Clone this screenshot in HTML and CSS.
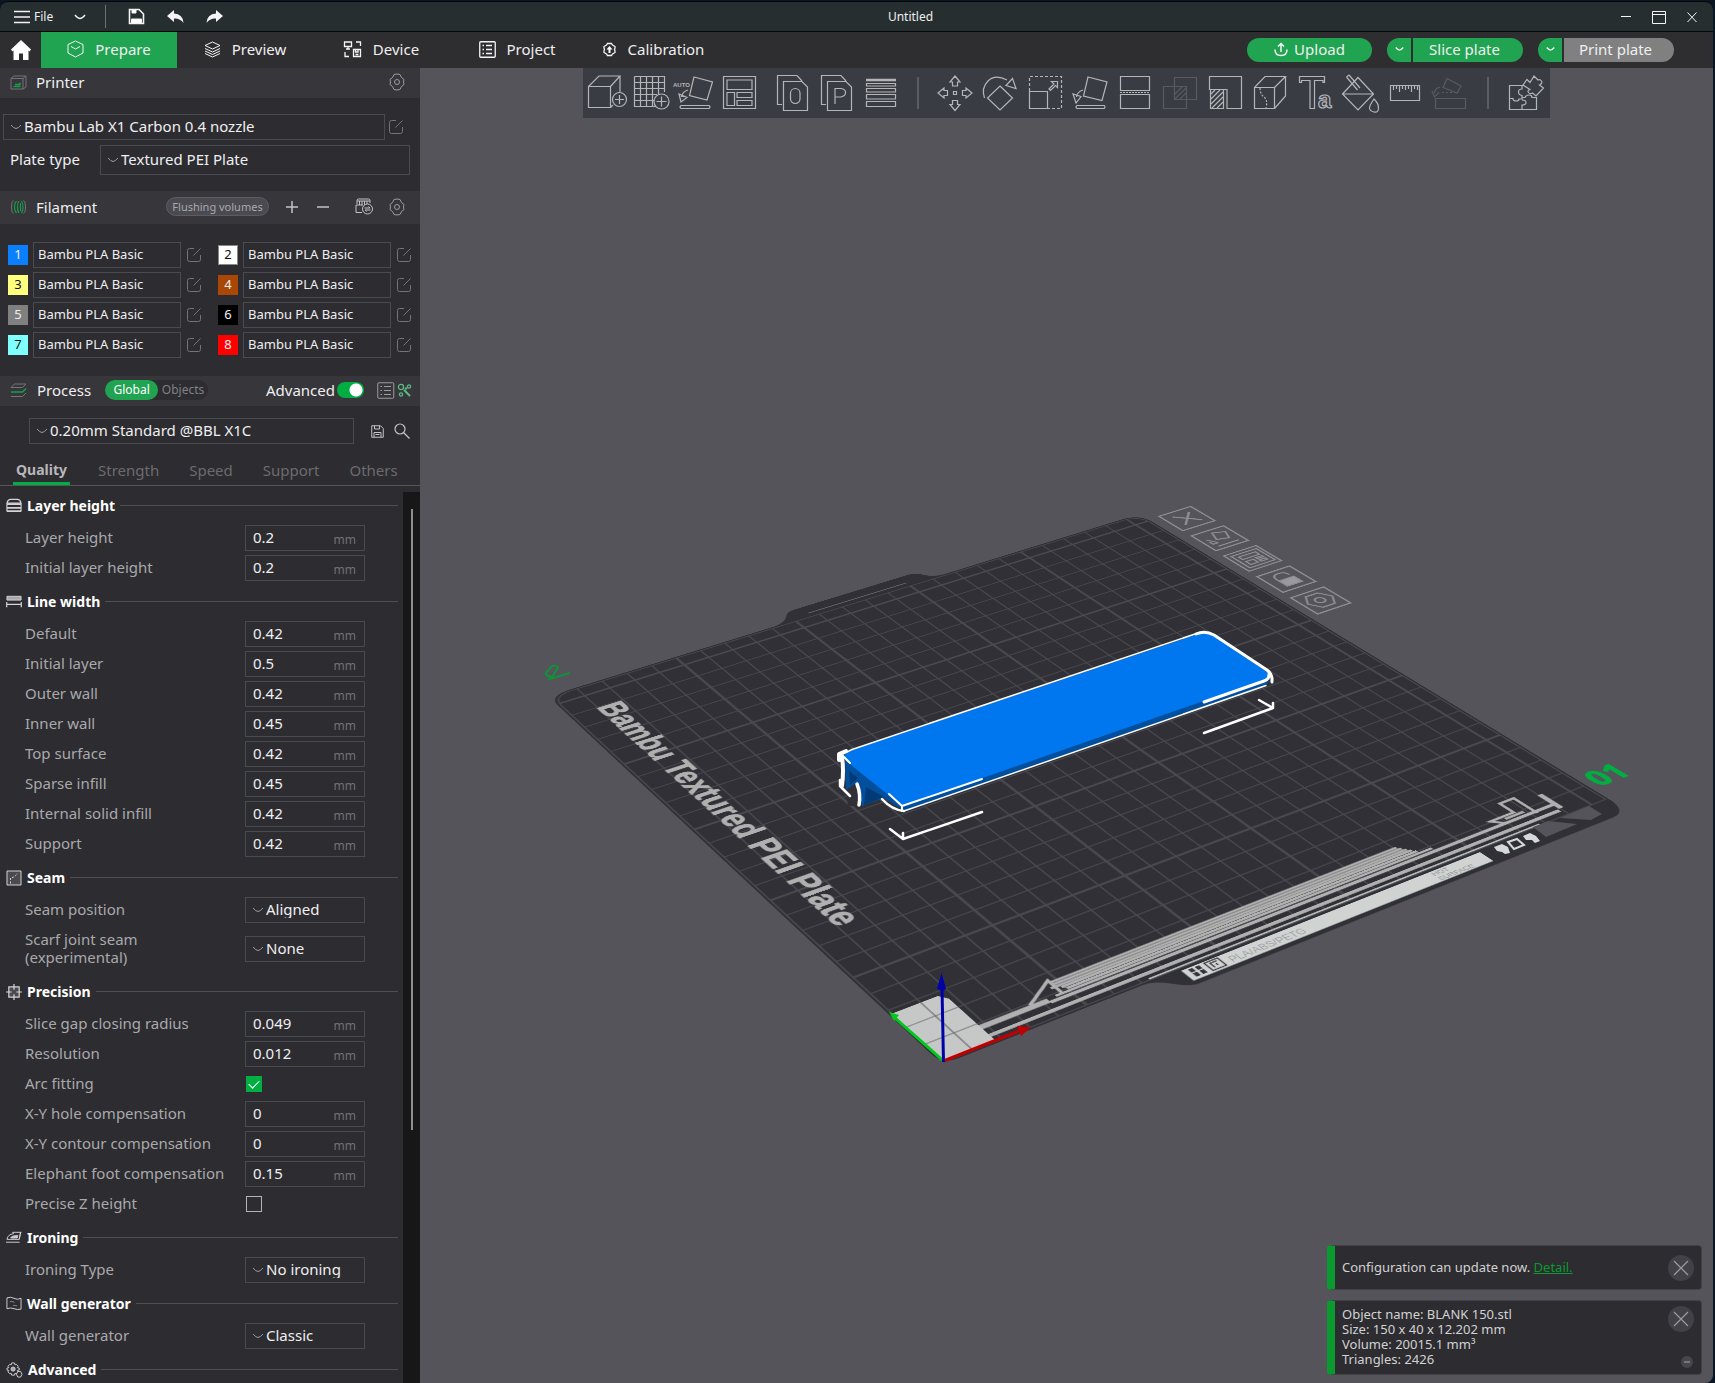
FILE: index.html
```html
<!DOCTYPE html>
<html lang="en">
<head>
<meta charset="utf-8">
<title>Untitled</title>
<link rel="stylesheet" href="styles.css">
</head>
<body>
<svg class="defs" width="0" height="0" aria-hidden="true">
  <symbol id="chev" viewBox="0 0 12 8"><path d="M1 2Q4 5.500 6 5.500T11 2"/></symbol>
  <symbol id="edit" viewBox="0 0 16 16"><path d="M8 1.500H3.500Q1.500 1.500 1.500 3.500V12.500Q1.500 14.500 3.500 14.500H12.500Q14.500 14.500 14.500 12.500V8M7.500 8.500L14.500 1.500"/></symbol>
  <symbol id="nut" viewBox="0 0 18 18"><path d="M6 1.500Q9 .5 12 1.500L13.500 4.500L16 6.500Q15 9 16 11.500L13.500 13.500L12 16.500Q9 17.500 6 16.500L4.500 13.500L2 11.500Q3 9 2 6.500L4.500 4.500Z"/><circle cx="9" cy="9" r="2.500"/></symbol>
  <symbol id="cross" viewBox="0 0 26 26"><path d="M6 6L20 20M20 6L6 20"/></symbol>
</svg>

<header class="titlebar">
  <button class="file"><svg class="ic" width="16" height="14" viewBox="0 0 16 14"><path d="M0 1.500H16M0 7H16M0 12.500H16" stroke-width="1.500"/></svg>File</button>
  <button class="plain chevbtn" aria-label="More"><svg class="ic" width="12" height="8" stroke-width="1.500"><use href="#chev"/></svg></button>
  <span class="tdiv"></span>
  <button class="plain tool" aria-label="Save"><svg class="ic" width="17" height="17" viewBox="0 0 17 17"><path d="M1.500 1.500H11L15.500 6V15.500H1.500Z" stroke-width="1.600"/><path d="M4 1.500H8V5H4ZM3.500 11H13.500V15.500H3.500Z" fill="#fff"/></svg></button>
  <button class="plain tool" aria-label="Undo"><svg width="17" height="14" viewBox="0 0 17 14" fill="#f4f4f4"><path d="M0 6L7 0V3.500Q16 4 16.500 13Q13 8 7 8.500V12Z"/></svg></button>
  <button class="plain tool" aria-label="Redo"><svg width="17" height="14" viewBox="0 0 17 14" fill="#f4f4f4"><path d="M17 6L10 0V3.500Q1 4 .5 13Q4 8 10 8.500V12Z"/></svg></button>
  <h1 class="title">Untitled</h1>
  <div class="winbtns">
    <button class="plain" aria-label="Minimize"><svg class="ic" width="14" height="14" viewBox="0 0 14 14"><path d="M2 6.500H12"/></svg></button>
    <button class="plain" aria-label="Maximize"><svg class="ic" width="14" height="14" viewBox="0 0 14 14"><path d="M.5 1.500H13.500V13.500H.5ZM.5 4.500H13.500"/></svg></button>
    <button class="plain" aria-label="Close"><svg class="ic" width="14" height="14" viewBox="0 0 14 14"><path d="M2.500 2.500L11.500 12M11.500 2.500L2.500 12"/></svg></button>
  </div>
</header>

<nav class="nav">
  <a class="home" href="#" aria-label="Home"><svg width="20" height="20" viewBox="0 0 20 20" fill="#fff"><path d="M10 0L20 9.500L18.500 11.500L17.500 10.500V20H12V13.500H8V20H2.500V10.500L1.500 11.500L0 9.500Z"/></svg></a>
  <a class="tab on" href="#"><svg class="ic" width="17" height="18" viewBox="0 0 17 18"><path d="M8.500 1L16 4.500V13L8.500 17L1 13V4.500ZM4 6.500L8.500 9L13 6.500"/></svg>Prepare</a>
  <a class="tab" href="#"><svg class="ic" width="17" height="17" viewBox="0 0 17 17"><path d="M8.500 1L16 4.500L8.500 8L1 4.500ZM1 7.500L8.500 11L16 7.500M1 10L8.500 13.500L16 10M1 12.500L8.500 16L16 12.500"/></svg>Preview</a>
  <a class="tab" href="#"><svg class="ic" width="19" height="17" viewBox="0 0 19 17"><path d="M1.500 1H8.500V5.500H1.500ZM5 5.500V8M3 8H7M13 1H17.500V5M2 11V15.500H6M10.500 8.500H17.500V15.500H10.500ZM12.500 8.500V11H15V8.500M12.500 13.500H15.500" stroke-width="1.300"/></svg>Device</a>
  <a class="tab" href="#"><svg class="ic" width="17" height="17" viewBox="0 0 17 17"><rect x=".75" y=".75" width="15.500" height="15.500" rx="1" stroke-width="1.300"/><path d="M3.500 4.500H5M7 4.500H13M3.500 8.500H5M7 8.500H13M3.500 12.500H5M7 12.500H13" stroke-width="1.400"/></svg>Project</a>
  <a class="tab" href="#"><svg class="ic" width="15" height="15" viewBox="0 0 15 15"><path d="M5.500 1.500H9.500L10.500 3L13 4.500V6L12.500 7.500L13 9V10.500L10.500 12L9.500 13.500H5.500L4.500 12L2 10.500V9L2.500 7.500L2 6V4.500L4.500 3Z" stroke-width="1.300"/><path d="M7.500 4L10.500 7.500H8.500V11H6.500V7.500H4.500Z" fill="#fff" stroke="none"/></svg>Calibration</a>
  <div class="actions">
    <button class="pill upload"><svg class="ic" width="14" height="15" viewBox="0 0 14 15" stroke-width="1.500"><path d="M7 10V1.500M4 4.500L7 1.500L10 4.500M1 7.500Q1 13.500 7 13.500T13 7.500"/></svg>Upload</button>
    <div class="split"><button class="pill drop" aria-label="Slice options"><svg class="ic" width="9" height="6" stroke-width="1.600"><use href="#chev"/></svg></button><button class="pill main">Slice plate</button></div>
    <div class="split"><button class="pill drop" aria-label="Print options"><svg class="ic" width="9" height="6" stroke-width="1.600"><use href="#chev"/></svg></button><button class="pill main off">Print plate</button></div>
  </div>
</nav>

<div class="work">
<aside class="side">
  <div class="shead">
    <svg class="dim" width="17" height="15" viewBox="0 0 17 15"><path d="M1 3.500L4 1H16V12L13 14H1ZM1 3.500H13V14M13 3.500L16 1"/><path d="M3.500 11.500H10.500M5 9.500H10V7.500" stroke="#12a048" stroke-width="1.500"/></svg>
    <h2>Printer</h2><span class="grow"></span>
    <button class="plain nutbtn" aria-label="Printer settings"><svg class="gray" width="18" height="18"><use href="#nut"/></svg></button>
  </div>
  <div class="printer">
    <div class="prow">
      <span class="sel grow"><svg class="gray" width="12" height="8"><use href="#chev"/></svg><select aria-label="Printer"><option>Bambu Lab X1 Carbon 0.4 nozzle</option></select></span>
      <button class="plain" aria-label="Edit printer"><svg class="dim" width="16" height="16"><use href="#edit"/></svg></button>
    </div>
    <div class="prow plate">
      <label for="plate">Plate type</label>
      <span class="sel tall grow"><svg class="gray" width="12" height="8"><use href="#chev"/></svg><select id="plate"><option>Textured PEI Plate</option></select></span>
    </div>
  </div>

  <div class="shead fil">
    <svg class="dim" width="17" height="16" viewBox="0 0 17 16"><path d="M3.500 1.500Q1.500 2 1.500 8T3.500 14.500M13.500 1.500Q15.500 2 15.500 8T13.500 14.500"/><path d="M6.500 2Q4.500 4 4.500 8T6.500 14M9 2Q7.500 4 7.500 8T9 14M11.500 2Q13 4 13 8T11.500 14M10.500 4V12" stroke="#12a048" stroke-width="1.200"/></svg>
    <h2>Filament</h2><span class="grow"></span>
    <button class="flush">Flushing volumes</button>
    <button class="plain pm" aria-label="Add filament"><svg class="lite" width="12" height="12" viewBox="0 0 12 12"><path d="M6 0V12M0 6H12" stroke-width="1.500"/></svg></button>
    <button class="plain pm" aria-label="Remove filament"><svg class="lite" width="12" height="12" viewBox="0 0 12 12"><path d="M0 6H12" stroke-width="1.500"/></svg></button>
    <button class="plain ams" aria-label="Sync filaments"><svg class="lite" width="19" height="17" viewBox="0 0 19 17"><path d="M2 6V2.500Q2 1 3.500 1H13.500Q15 1 15 2.500V5M4.500 3V7M7 3V7M9.500 3V7M12 3V6M2 3H15M1 7H8M1 7V14.500H7"/><circle cx="12.500" cy="11" r="5"/><path d="M9.500 10H15L13.500 8.500M15.500 12H10L11.500 13.500"/></svg></button>
    <button class="plain nutbtn" aria-label="Filament settings"><svg class="gray" width="18" height="18"><use href="#nut"/></svg></button>
  </div>
  <div class="filaments">
    <div class="fitem"><span class="sw s1">1</span><select aria-label="Filament 1"><option>Bambu PLA Basic</option></select><button class="plain" aria-label="Edit 1"><svg class="dim" width="16" height="16"><use href="#edit"/></svg></button></div>
    <div class="fitem"><span class="sw s2">2</span><select aria-label="Filament 2"><option>Bambu PLA Basic</option></select><button class="plain" aria-label="Edit 2"><svg class="dim" width="16" height="16"><use href="#edit"/></svg></button></div>
    <div class="fitem"><span class="sw s3">3</span><select aria-label="Filament 3"><option>Bambu PLA Basic</option></select><button class="plain" aria-label="Edit 3"><svg class="dim" width="16" height="16"><use href="#edit"/></svg></button></div>
    <div class="fitem"><span class="sw s4">4</span><select aria-label="Filament 4"><option>Bambu PLA Basic</option></select><button class="plain" aria-label="Edit 4"><svg class="dim" width="16" height="16"><use href="#edit"/></svg></button></div>
    <div class="fitem"><span class="sw s5">5</span><select aria-label="Filament 5"><option>Bambu PLA Basic</option></select><button class="plain" aria-label="Edit 5"><svg class="dim" width="16" height="16"><use href="#edit"/></svg></button></div>
    <div class="fitem"><span class="sw s6">6</span><select aria-label="Filament 6"><option>Bambu PLA Basic</option></select><button class="plain" aria-label="Edit 6"><svg class="dim" width="16" height="16"><use href="#edit"/></svg></button></div>
    <div class="fitem"><span class="sw s7">7</span><select aria-label="Filament 7"><option>Bambu PLA Basic</option></select><button class="plain" aria-label="Edit 7"><svg class="dim" width="16" height="16"><use href="#edit"/></svg></button></div>
    <div class="fitem"><span class="sw s8">8</span><select aria-label="Filament 8"><option>Bambu PLA Basic</option></select><button class="plain" aria-label="Edit 8"><svg class="dim" width="16" height="16"><use href="#edit"/></svg></button></div>
  </div>

  <div class="shead proc">
    <svg class="dim" width="17" height="15" viewBox="0 0 17 15"><path d="M4.500 1H16L12.500 4.500H1ZM1 13.500H12.500L16 10"/><path d="M1 9H12.500L16 5.500" stroke="#12a048" stroke-width="1.500"/></svg>
    <h2>Process</h2>
    <div class="scope"><button class="on">Global</button><button>Objects</button></div>
    <span class="grow"></span>
    <label for="adv">Advanced</label><input class="switch" type="checkbox" id="adv" checked>
    <button class="plain list" aria-label="Parameter list"><svg class="gray" width="18" height="17" viewBox="0 0 18 17"><rect x=".75" y=".75" width="16" height="15.500" rx="1"/><path d="M3.500 4.500H5M7 4.500H14M3.500 8.500H5M7 8.500H14M3.500 12.500H5M7 12.500H14"/></svg></button>
    <button class="plain" aria-label="Compare"><svg width="15" height="15" viewBox="0 0 15 15" fill="none" stroke="#5cb883" stroke-width="1.300"><circle cx="4" cy="4" r="2.600"/><circle cx="12" cy="3.500" r="1.600"/><circle cx="4" cy="11.500" r="1.600"/><path d="M7 7L13 13M8 6L10 5" stroke-width="2"/></svg></button>
  </div>
  <div class="preset">
    <span class="sel grow"><svg class="gray" width="12" height="8"><use href="#chev"/></svg><select aria-label="Process preset"><option>0.20mm Standard @BBL X1C</option></select></span>
    <button class="plain" aria-label="Save preset"><svg class="lite" width="13" height="13" viewBox="0 0 13 13"><path d="M.75 .75H9.500L12.250 3.500V12.250H.75ZM3.500 .75V4H8.500V.75M3 12V7.500H10V12M4.500 9.500H8.500"/></svg></button>
    <button class="plain" aria-label="Search"><svg class="lite" width="16" height="16" viewBox="0 0 16 16"><circle cx="6" cy="6" r="5" stroke-width="1.200"/><path d="M9.500 9.500L15.500 15.500" stroke-width="1.200"/></svg></button>
  </div>
  <div class="ptabs"><a class="on" href="#">Quality</a><a href="#">Strength</a><a href="#">Speed</a><a href="#">Support</a><a href="#">Others</a></div>

  <div class="scroll">
    <form class="params">
      <h3><svg class="hic" width="16" height="15" viewBox="0 0 17 15"><path d="M1 5Q2 1 5 1H12Q15 1 16 5ZM1 5.500V14M16 5.500V14" stroke-width="1.200"/><path d="M1 6H16M1 10H16M1 13.500H16" stroke-width="1.800"/></svg>Layer height</h3>
      <div class="row"><label for="p1">Layer height</label><span class="field"><input id="p1" value="0.2"><i>mm</i></span></div>
      <div class="row"><label for="p2">Initial layer height</label><span class="field"><input id="p2" value="0.2"><i>mm</i></span></div>
      <h3><svg class="hic" width="16" height="13" viewBox="0 0 17 13"><path d="M1 1H16V5H1Z" fill="#a8a8a8"/><path d="M.75 7V12.500M16.250 7V12.500M1 9.500H16" stroke-width="1.300"/></svg>Line width</h3>
      <div class="row"><label for="w1">Default</label><span class="field"><input id="w1" value="0.42"><i>mm</i></span></div>
      <div class="row"><label for="w2">Initial layer</label><span class="field"><input id="w2" value="0.5"><i>mm</i></span></div>
      <div class="row"><label for="w3">Outer wall</label><span class="field"><input id="w3" value="0.42"><i>mm</i></span></div>
      <div class="row"><label for="w4">Inner wall</label><span class="field"><input id="w4" value="0.45"><i>mm</i></span></div>
      <div class="row"><label for="w5">Top surface</label><span class="field"><input id="w5" value="0.42"><i>mm</i></span></div>
      <div class="row"><label for="w6">Sparse infill</label><span class="field"><input id="w6" value="0.45"><i>mm</i></span></div>
      <div class="row"><label for="w7">Internal solid infill</label><span class="field"><input id="w7" value="0.42"><i>mm</i></span></div>
      <div class="row"><label for="w8">Support</label><span class="field"><input id="w8" value="0.42"><i>mm</i></span></div>
      <h3><svg class="hic" width="16" height="16" viewBox="0 0 16 16"><path d="M1 1H15V15H1Z" fill="#4b4a4f"/><path d="M4.500 13.500V8Q9 7.500 11.500 3" stroke-dasharray="2 1.500"/></svg>Seam</h3>
      <div class="row"><label for="s1">Seam position</label><span class="sel fld"><svg class="gray" width="12" height="8"><use href="#chev"/></svg><select id="s1"><option>Aligned</option></select></span></div>
      <div class="row two"><label for="s2">Scarf joint seam<br>(experimental)</label><span class="sel fld"><svg class="gray" width="12" height="8"><use href="#chev"/></svg><select id="s2"><option>None</option></select></span></div>
      <h3><svg class="hic" width="16" height="16" viewBox="0 0 17 17"><path d="M3 3H14V14H3Z" fill="#4b4a4f" stroke-width="1.300"/><path d="M8.500 0V6M8.500 11V17M0 8.500H6M11 8.500H17" stroke-width="1.300"/></svg>Precision</h3>
      <div class="row"><label for="r1">Slice gap closing radius</label><span class="field"><input id="r1" value="0.049"><i>mm</i></span></div>
      <div class="row"><label for="r2">Resolution</label><span class="field"><input id="r2" value="0.012"><i>mm</i></span></div>
      <div class="row"><label for="r3">Arc fitting</label><input class="check" type="checkbox" id="r3" checked></div>
      <div class="row"><label for="r4">X-Y hole compensation</label><span class="field"><input id="r4" value="0"><i>mm</i></span></div>
      <div class="row"><label for="r5">X-Y contour compensation</label><span class="field"><input id="r5" value="0"><i>mm</i></span></div>
      <div class="row"><label for="r6">Elephant foot compensation</label><span class="field"><input id="r6" value="0.15"><i>mm</i></span></div>
      <div class="row"><label for="r7">Precise Z height</label><input class="check" type="checkbox" id="r7"></div>
      <h3><svg class="hic" width="16" height="13" viewBox="0 0 17 13"><path d="M1 8.500Q2 3 8 2.500L7 1H16.500M15.500 1L14 8.500ZM1 8.500H14M0 11.500H14.500"/><path d="M5 7Q6 4.500 12.500 4.500L12 7Z" fill="#c8c8c8"/></svg>Ironing</h3>
      <div class="row"><label for="i1">Ironing Type</label><span class="sel fld"><svg class="gray" width="12" height="8"><use href="#chev"/></svg><select id="i1"><option>No ironing</option></select></span></div>
      <h3><svg class="hic" width="16" height="15" viewBox="0 0 17 15"><path d="M1 1.500Q5 0 8.500 2T16 2V13.500Q12 14.500 8.500 13T1 13Z"/><path d="M4 5.500H7.500L9 6.500M7.500 9.500L12 10" stroke="#8a8a8a"/></svg>Wall generator</h3>
      <div class="row"><label for="g1">Wall generator</label><span class="sel fld"><svg class="gray" width="12" height="8"><use href="#chev"/></svg><select id="g1"><option>Classic</option></select></span></div>
      <h3><svg class="hic" width="17" height="16" viewBox="0 0 18 17"><path d="M6 1H9L9.500 3L11 2.500L13 4.500L12 6L14 6.500V8.500L12 9L13 10.500L11 12.500L9.500 12L9 14H6L5.500 12L4 12.500L2 10.500L3 9L1 8.500V6.500L3 6L2 4.500L4 2.500L5.500 3Z"/><circle cx="7.500" cy="7.500" r="2.200" fill="#aaa"/><path d="M12.500 10H15.500L17 13L15.500 16H12.500L11 13Z" fill="#2d2c30"/></svg>Advanced</h3>
    </form>
    <div class="track"><div class="thumb"></div></div>
  </div>
</aside>

<main class="stage">
  <svg class="bed" width="768" height="768" viewBox="0 0 768 768">
    <g transform="matrix(3 0 0 -3 0 768)">
      <path fill="#313036" d="M-1 5V249Q-1 257 8 257H92Q97 258 99 261.500Q101 264.300 104 264.300H154Q157 264.300 159 261Q161 257 166 257H248Q257 257 257 248V-2Q256 -9.500 250 -9.500H84Q81 -9.500 78 -6Q74 -1 70 -1H5Q-1 -1 -1 5Z"/>
      <g fill="none" stroke="#4a4b50" stroke-width=".55">
        <path d="M10 0v256m10-256v256m10-256v256m10-256v256m20-256v256m10-256v256m10-256v256m10-256v256m20-256v256m10-256v256m10-256v256m10-256v256m20-256v256m10-256v256m10-256v256m10-256v256m20-256v256m10-256v256m10-256v256m10-256v256M0 10h256m-256 10h256m-256 10h256m-256 10h256m-256 20h256m-256 10h256m-256 10h256m-256 10h256m-256 20h256m-256 10h256m-256 10h256m-256 10h256m-256 20h256m-256 10h256m-256 10h256m-256 10h256m-256 20h256m-256 10h256m-256 10h256m-256 10h256M0 6V248Q0 256 8 256H248Q256 256 256 248V0H0"/>
        <path stroke-width="1" d="M50 0v256m50-256v256m50-256v256m50-256v256m50-256v256M0 50h256m-256 50h256m-256 50h256m-256 50h256m-256 50h256"/>
        <path stroke="#5d5d63" stroke-width=".6" d="M107 259H150"/>
      </g>
      <path fill="#c6c8c8" d="M0 0H18V25L16 28H0Z"/>
      <path fill="none" stroke="#66676a" stroke-width=".4" d="M10 0V28M0 10H18M0 20H18"/>
      <g fill="none" stroke="#b0b0b0">
        <path stroke-width="1.600" d="M18 3.200H239"/>
        <path stroke-width="2.400" d="M18 8H42"/>
        <path stroke-width="1.500" d="M42 7H241"/>
        <path stroke-width="2" d="M240.500 4V14"/>
        <path stroke-width="1.200" d="M36 9L47.500 16.500V9M219 7.500L216 10.500H226V17H232V6M221 9H229"/>
        <path stroke-width="1.150" d="M48 15.300H181M47 14H182M46 12.700H183M49 11.400H184M50 10.100H185M45 8.800H190"/>
        <path stroke="#c4c8c8" stroke-width=".7" d="M73 .6H228"/>
      </g>
      <path fill="#cfd4d3" d="M83.500 -7.500H201V-1.300H83.500Z"/>
      <path fill="#35353a" d="M85.500 -6.300h1.600v2h-1.600zM88 -6.300h1.600v2h-1.600zM85.500 -3.800h1.600v1.800h-1.600zM88 -3.800h1.600v1.800h-1.600z"/>
      <path fill="none" stroke="#35353a" stroke-width=".5" d="M91.500 -6.500H96.500V-2H91.500ZM93 -5.500V-3H95.500M94.500 -5V-4"/>
      <g fill="none" stroke="#8d8d92" stroke-width=".8">
        <path d="M262 235.500h15.500v15.500h-15.500zM262 214.500h15.500v15.500h-15.500z"/>
        <path stroke-width="1" d="M266 239L274 247.500M266 247.500L274 239"/>
        <path d="M268 222L273 220.500L275 225.500L270 227.500ZM265 217H275M264.500 224L267 219.500M264.500 222V219.500H266.500"/>
        <path transform="translate(-.3 .3)" d="M262 193.500h15.500v15.500h-15.500zM264 195.500H276V207H264ZM266 202.500H274V205H266ZM266 197.500H269.500V200.500H266ZM271 197.500H274V198.800H271ZM271 200H274V201H271Z"/>
        <g transform="translate(-.6 .6)"><path d="M262 172.500h15.500v15.500h-15.500zM266.500 180V182.500Q267 185.500 270 185.500T273 182.500"/><path fill="#9a9a9e" d="M266.500 175.500H273.500V180.500H266.500Z"/></g>
        <g transform="translate(-1 1)"><path d="M262 151.500h15.500v15.500h-15.500zM264 159.500L267 154.500H272.500L275.500 159.500L272.500 164.500H267Z"/><circle cx="269.700" cy="159.500" r="2"/></g>
      </g>
    </g>
    <text class="bedname" transform="translate(29 47) rotate(90)">Bambu Textured PEI Plate</text>
    <text class="bedno" x="780" y="748">01</text>
    <text class="bedmat" x="297" y="787">PLA/ABS/PETG</text>
    <text class="bedhot" x="540" y="780">HOT</text><text class="bedhot" x="540" y="789">SURFACE</text>
  </svg>

  <svg class="model" width="1291" height="1315" viewBox="420 68 1291 1315" fill="none">
    <path fill="#55545a" d="M1533 827L1548 821L1577 824L1546 837ZM1560 818L1589 806L1602 814L1591 820Z"/>
    <path fill="#d4d8d8" d="M1494 847L1502 844L1508 847L1510 853L1505 854L1502 852L1497 851ZM1523 836L1530 833L1536 836L1540 841L1535 843L1532 840L1526 840Z"/>
    <path stroke="#d4d8d8" stroke-width="2" d="M1508 842L1517 839L1524 845L1514 849Z"/>
    <path stroke="#12903c" stroke-width="2" d="M545.500 673.500L551 667Q554 664.500 558 667L553 676Q548 678 545.500 673.500ZM548 679.500L570 673"/>

    <path fill="#024f9e" d="M845 757L846 790L856 783L862 806L884 798L904 811L1266 685L1271 678L901 800Z"/>
    <path fill="#013a76" d="M849 771L858 778L850 785ZM866 787L884 797L864 805Z"/>
    <path fill="#313036" d="M846 790L856 784L858 806H848Z"/>
    <path fill="#0077ee" d="M846 761Q841 754 852 750L1198 634Q1206 631 1214 636L1266 671Q1272 677 1264 680L902 806Z"/>
    <g stroke="#fff" stroke-linejoin="round" stroke-linecap="round">
      <path stroke-width="1.500" d="M843 754L852 749.500L1198 633M904 811L1266 685.500"/>
      <path stroke-width="3" d="M1196 634Q1205 630 1214 635L1267 670Q1271 673 1272 678V682M1204 702L1264 681Q1270 679 1269 673"/>
      <path stroke-width="2" d="M889 794L902 806L982 779M902 806V811M842 755L850 763"/>
      <path stroke-width="2.500" d="M882 799Q892 810 904 811"/>
      <path stroke-width="4" d="M846 751L839 754V760M842 757Q844 770 842 786"/>
      <path stroke-width="2.500" d="M840 780V786L850 796"/>
      <path stroke-width="3.500" d="M857 784Q861 794 859 805"/>
      <path stroke-width="2.500" d="M890 829L903 839L982 812M903 833V839M1259 700L1273 708L1204 733M1273 703V708"/>
    </g>

    <path stroke="#c00000" stroke-width="3" d="M943.500 1061L1019 1031"/><path fill="#c00000" d="M1017 1026L1031 1027L1021 1036Z"/>
    <path stroke="#00c81c" stroke-width="3" d="M943.500 1061L895 1018"/><path fill="#00c81c" d="M889 1012L899 1015L894 1021Z"/>
    <path stroke="#0000a8" stroke-width="3" d="M943.500 1062L942 988"/><path fill="#0000a8" d="M941.500 973L946 989L942 991L937 989Z"/>
  </svg>

  <div class="toolbar">
    <div class="tg">
      <button aria-label="Add"><svg viewBox="0 0 44 50"><path d="M3.500 18.500H25.500V39.500H3.500ZM3.500 18.500L14 8H35L25.500 18.500M35 8V24M25.500 39.500L28 37"/><circle cx="34.500" cy="31.500" r="7"/><path d="M34.500 27V36M30 31.500H39"/></svg></button>
      <button aria-label="Add plate"><svg viewBox="0 0 44 50"><path d="M5.500 8.500H35.500V24M5.500 8.500V38.500H27M11.500 8.500V38.500M17.500 8.500V38.500M23.500 8.500V38.500M29.500 8.500V26M5.500 14.500H35.500M5.500 20.500H35.500M5.500 26.500H28M5.500 32.500H25.500"/><circle cx="32.500" cy="33.500" r="7.500"/><path d="M32.500 28.500V38.500M27.500 33.500H37.500"/></svg></button>
      <button aria-label="Auto orient"><svg viewBox="0 0 44 50"><path d="M21 9L39.500 14L34 32L16.500 27.500ZM8 37.500H36Q38 39 36 40.500H8Q6 39 8 37.500ZM15 22Q9 24 8.500 29M6 26L8 34L14 29.500Z"/><text class="auto" x="0" y="19">AUTO</text></svg></button>
      <button aria-label="Arrange"><svg viewBox="0 0 44 50"><path d="M6.500 8.500H38.500V40.500H6.500ZM10 12H35V21.500H10ZM10 24.500H17.500V37.500H10ZM20 24.500H35V29.500H20ZM20 32.500H35V37.500H20Z"/></svg></button>
    </div>
    <div class="tg">
      <button aria-label="Split to objects"><svg viewBox="0 0 44 50"><path d="M11 36.500H6.500V7.500H26L31 13M12.500 13.500H31L36.500 19V42.500H12.500Z"/><rect x="19.500" y="20.500" width="9.500" height="15" rx="4.700"/></svg></button>
      <button aria-label="Split to parts"><svg viewBox="0 0 44 50"><path d="M11 36.500H6.500V7.500H26L31 13M12.500 13.500H31L36.500 19V42.500H12.500Z"/><path d="M20 36V20.500H26Q30.500 21 30.500 24.500T26 29H20"/></svg></button>
      <button aria-label="Variable layer height"><svg viewBox="0 0 44 50"><path d="M7 12H37" stroke-width="2.500"/><path d="M7.500 15.500H36.500V18H7.500ZM7.500 20.500H36.500V24H7.500ZM7.500 26.500H36.500V31H7.500ZM7.500 33.500H36.500V38.500H7.500Z"/></svg></button>
    </div>
    <span class="tsep"></span>
    <div class="tg wide">
      <button aria-label="Move"><svg viewBox="0 0 44 50"><path d="M22 8L27 14H24.500V18H19.500V14H17ZM22 42.500L27 36.500H24.500V32.500H19.500V36.500H17ZM5 25L11 20V22.500H14.500V27.500H11V30ZM39 25L33 20V22.500H29.500V27.500H33V30ZM20.500 23.500H23.500V26.500H20.500Z"/></svg></button>
      <button aria-label="Rotate"><svg viewBox="0 0 44 50"><path d="M22 18L34.500 30L22 42L9.500 30ZM6.500 30Q3 20 10 13T29 12M34.500 10.500L38 20.500L28 17.500Z"/></svg></button>
      <button aria-label="Scale"><svg viewBox="0 0 44 50"><path d="M6.500 23.500H24.500V40.500H6.500Z"/><path stroke-dasharray="3 2" d="M6.500 23V8.500H38.500V40.500H25"/><path d="M26 21L31 16L28.500 13.500H34.500V19.500L32.500 17.500L27.500 22.500Z"/></svg></button>
      <button aria-label="Lay on face"><svg viewBox="0 0 44 50"><path d="M20 9L39 14L34 32.500L15.500 28ZM9 37.500H36Q38 39 36 40.500H9Q7 39 9 37.500ZM15 22Q9 24 8.500 29M5 26L8 35L13 28.500Z"/></svg></button>
      <button aria-label="Cut"><svg viewBox="0 0 44 50"><path d="M7.500 8.500H36.500V22.500H7.500ZM7.500 26.500H36.500V40.500H7.500Z"/><path stroke-dasharray="2 1" d="M7 24.500H37"/></svg></button>
      <button class="faint" aria-label="Boolean"><svg viewBox="0 0 44 50"><path d="M16.500 9.500H38.500V31.500H16.500ZM5.500 18.500H28.500V40.500H5.500ZM17 26L24 19M17 31L28 20M22 31L28 25"/></svg></button>
      <button aria-label="Supports"><svg viewBox="0 0 44 50"><path d="M6.500 8.500H38.500V40.500H24V21.500H6.500ZM7.500 21.500V40.500H20.500V21.500M8 26L12 22M8 31L17 22M8 36L20 24M9 40L20 29M14 40L20 34"/></svg></button>
      <button aria-label="Seam painting"><svg viewBox="0 0 44 50"><path d="M6.500 19.500H26.500V40.500H6.500ZM6.500 19.500L17 8.500H37.500L26.500 19.500M37.500 8.500V28L26.500 40.500"/><path stroke-dasharray="2 1.500" d="M12 20Q12 26 16 29T18 40"/></svg></button>
      <button aria-label="Text"><svg viewBox="0 0 44 50"><path d="M6.500 8.500H31.500V14.500H30V12.500H21.500V40.500H17V12.500H8.500V14.500H6.500Z"/><text class="ta" x="25" y="40">a</text></svg></button>
      <button aria-label="Color painting"><svg viewBox="0 0 44 50"><path d="M4.500 26L20 9.500L35.500 26L20 42ZM5 26H35M11 7L22 20M8.500 9L19.500 22M11 7L8.500 9M36 31Q31 38 31.500 40.500T36 44T40.500 40.500T36 31Z"/></svg></button>
      <button aria-label="Measure"><svg viewBox="0 0 44 50"><path d="M7.500 17.500H36.500V32.500H7.500ZM10.500 18V22M13.500 18V21M16.500 18V24M19.500 18V21M22.500 18V22M25.500 18V21M28.500 18V24M31.500 18V21M34.500 18V22"/></svg></button>
      <button class="faint" aria-label="Assemble"><svg viewBox="0 0 44 50"><path d="M7.500 30.500H37.500V40.500H7.500ZM19 10.500L33 18L29 25L15 19.500ZM12 19Q7 20 6.500 25M4 23L6.500 29L11 24.500"/><path stroke-dasharray="2 2" d="M14 24.500H30"/></svg></button>
    </div>
    <span class="tsep"></span>
    <div class="tg">
      <button aria-label="Assembly view"><svg viewBox="0 0 44 50"><path d="M6.500 17.500H19V21Q15.500 21 15.500 24T19 27.500V31H16Q16 33 13 33T10 30.500H6.500ZM6.500 30.500V41.500H33.500V29.500H29Q29 27 26 27T22 29.500H19M19 41V37Q23 37 23 34.500T19 32M24 11.500L27 14.500Q30 10 31 8L35 12Q37 11 38.500 13T36.500 17L40.500 20L33 28L29.500 25Q27 26.500 25.500 24.500T27 21.500L20 17Z"/></svg></button>
    </div>
  </div>

  <div class="notes">
    <div class="note">
      <p>Configuration can update now. <a href="#">Detail.</a></p>
      <button class="x" aria-label="Dismiss"><svg width="26" height="26"><use href="#cross"/></svg></button>
    </div>
    <div class="note info">
      <p>Object name: BLANK 150.stl<br>Size: 150 x 40 x 12.202 mm<br>Volume: 20015.1 mm³<br>Triangles: 2426</p>
      <div class="nctl">
        <button class="x" aria-label="Dismiss"><svg width="26" height="26"><use href="#cross"/></svg></button>
        <button class="mini" aria-label="Collapse"></button>
      </div>
    </div>
  </div>
</main>
</div>
</body>
</html>
```
FILE: styles.css
```css
* { box-sizing: border-box; }
html, body { height: 100%; }
body {
  margin: 0;
  padding: 1px 2px 0 0;
  display: flex;
  flex-direction: column;
  overflow: hidden;
  background: #0b1624;
  color: #efeff0;
  font: 15px/18px "Noto Sans", "Open Sans", sans-serif;
}
button, input, select { font: inherit; color: inherit; margin: 0; }
button { border: 0; padding: 0; background: none; }
select { appearance: none; border: 1px solid #4a4a51; background: none; border-radius: 0; padding: 0 0 2px; }
h1, h2, h3, p { margin: 0; font-weight: 400; font-size: inherit; }
a { color: inherit; text-decoration: none; }
svg { display: block; flex: none; }
.defs { position: absolute; }
.plain { display: flex; align-items: center; justify-content: center; }
.grow { flex: 1; min-width: 0; }
.ic { fill: none; stroke: #f4f4f4; }
.dim { fill: none; stroke: #747478; }
.gray { fill: none; stroke: #9c9ca0; }
.lite { fill: none; stroke: #c4c4c6; }

/* title bar */
.titlebar {
  flex: none;
  position: relative;
  display: flex;
  align-items: center;
  height: 31px;
  padding: 0 14px;
  background: #262e30;
  border: solid #050808;
  border-width: 1px 0;
  border-radius: 8px 8px 0 0;
  font-size: 12px;
}
.file { display: flex; align-items: center; gap: 4px; }
.chevbtn { margin-left: 21px; }
.tdiv { width: 1px; height: 23px; margin: 0 22px 0 19px; background: #6d7375; }
.tool { margin-right: 22px; }
.title { position: absolute; left: 0; right: 0; text-align: center; padding-left: 108px; pointer-events: none; }
.winbtns { display: flex; gap: 19px; margin-left: auto; }

/* main tabs */
.nav { flex: none; display: flex; height: 36px; background: #2e2d2f; }
.home { width: 41px; display: flex; align-items: center; justify-content: center; }
.tab { width: 136px; display: flex; align-items: center; justify-content: center; gap: 11px; padding-bottom: 2px; }
.tab.on { background: #21a452; }
.actions { display: flex; gap: 15px; align-items: center; margin: 0 39px 0 auto; padding-bottom: 1px; }
.split { display: flex; gap: 2px; }
.pill { height: 24px; background: #21a452; border-radius: 12px; display: flex; align-items: center; justify-content: center; gap: 6px; padding-bottom: 1px; }
.upload { width: 125px; }
.drop { width: 24px; border-radius: 12px 0 0 12px; }
.main { width: 110px; padding-right: 7px; border-radius: 0 12px 12px 0; }
.off { background: #808080; }

.work { flex: 1; min-height: 0; display: flex; }

/* sidebar */
.side { flex: none; width: 420px; display: flex; flex-direction: column; background: #2d2c30; }
.shead { flex: none; display: flex; align-items: center; height: 30px; padding: 0 14px 2px 10px; background: #37363b; }
.shead h2 { margin-left: 9px; }
.printer { flex: none; padding: 16px 10px 16px 3px; display: flex; flex-direction: column; gap: 5px; }
.prow { display: flex; align-items: center; gap: 3px; padding-right: 6px; }
.prow.plate { padding: 0 0 0 7px; }
.plate label { width: 87px; padding-bottom: 2px; }
.sel { display: flex; align-items: center; height: 26px; border: 1px solid #4a4a51; padding-left: 6px; }
.sel svg { margin-right: -12px; }
.sel select { flex: 1; min-width: 0; border: 0; height: 24px; padding-left: 14px; }
.sel.tall { height: 30px; }
.fil { height: 33px; }
.flush { height: 19px; width: 103px; border: 1px solid #5c5c63; border-radius: 10px; background: #4a4a50; color: #a9a9ad; font-size: 11px; line-height: 16px; margin-right: 17px; }
.pm { margin-right: 19px; }
.ams { margin: 0 14px 0 7px; }
.filaments { flex: none; display: grid; grid-template-columns: 210px 210px; row-gap: 4px; padding: 18px 0; }
.fitem { display: flex; align-items: center; padding-left: 8px; font-size: 13px; }
.fitem select { width: 148px; height: 26px; padding-left: 4px; margin: 0 5px; }
.sw { width: 20px; height: 20px; line-height: 19px; text-align: center; }
.s1 { background: #0a80ff; }
.s2 { background: #fff; color: #111; outline: 1px solid #888; outline-offset: -1px; }
.s3 { background: #ffff80; color: #111; }
.s4 { background: #a84706; }
.s5 { background: #808080; }
.s6 { background: #000; }
.s7 { background: #80ffff; color: #111; }
.s8 { background: #f00; }
.proc { padding-right: 8px; }
.proc h2 { margin-left: 10px; }
.scope { display: flex; margin-left: 14px; border-radius: 11px; background: #2d2c30; font-size: 12px; color: #808085; }
.scope button { height: 20px; width: 50px; line-height: 18px; }
.scope .on { width: 53px; border-radius: 10px; background: #21a452; color: #fff; }
.switch { appearance: none; width: 27px; height: 16px; margin-left: 2px; border-radius: 8px; background: radial-gradient(circle at 19px 8px, #fff 6px, #00ae42 7px); }
.list { margin: 0 2px 0 13px; }
.preset { flex: none; display: flex; align-items: center; padding: 12px 10px 0 29px; }
.preset .sel { margin-right: 17px; }
.preset button + button { margin-left: 10px; }
.ptabs { flex: none; display: flex; height: 42px; padding: 11px 0 0 13px; border-bottom: 1px solid #55555b; color: #6b6b6f; }
.ptabs a { margin-right: 26px; padding: 6px 2px 0; }
.ptabs .on { color: #b8b8bb; font-size: 14px; font-weight: 700; padding: 6px 3px 0; border-bottom: 3px solid #00ae42; }
.scroll { flex: 1; min-height: 0; display: flex; overflow: hidden; }
.params { flex: 1; padding: 1px 5px 0 6px; }
.params h3 { display: flex; align-items: center; gap: 5px; height: 24px; margin: 7px 0 5px; padding-bottom: 1px; font-size: 14px; font-weight: 700; color: #fff; }
.params h3::after { content: ""; flex: 1; height: 1px; background: #4e4e55; }
.hic { fill: none; stroke: #d4d4d6; }
.row { display: flex; align-items: center; height: 30px; padding-left: 19px; }
.row label { width: 220px; padding-bottom: 2px; color: #a9a9ac; white-space: nowrap; }
.row.two { height: 48px; }
.field, .fld { width: 120px; height: 26px; border: 1px solid #4a4a51; display: flex; align-items: center; }
.field input { flex: 1; min-width: 0; border: 0; background: none; padding: 0 0 2px 7px; height: 24px; }
.field i { font-style: normal; font-size: 12px; color: #727276; padding: 4px 8px 0 0; }
.check { appearance: none; width: 16px; height: 16px; margin-left: 1px; border: 1px solid #b4b4b6; }
.check:checked { border-color: #00ae42; background: #00ae42; display: grid; place-items: center; }
.check:checked::after { content: ""; width: 9px; height: 5px; margin-top: -3px; border: solid #fff; border-width: 0 0 1px 1px; transform: rotate(-45deg); }
.track { width: 17px; margin-top: 6px; padding: 17px 0 0 8px; background: #171717; }
.thumb { width: 2px; height: 71%; background: #8e8e90; }

/* 3D view */
.stage { flex: 1; min-width: 0; position: relative; overflow: hidden; background: #55545a; border-radius: 0 0 8px 0; display: flex; flex-direction: column; align-items: center; justify-content: space-between; }
.bed { position: absolute; left: 0; top: 0; overflow: visible; transform-origin: 0 0;
  transform: matrix3d(0.86782, -0.171554, 0, 0.000143578, 0.380226, 0.228811, 0, -0.000248141, 0, 0, 1, 0, 131.8, 628.6, 0, 1); }
.model { position: absolute; left: 0; top: 0; }
.bedname { font: 700 40px "Liberation Sans", sans-serif; fill: #b0b0b0; stroke: #b0b0b0; stroke-width: 1px; }
.bedno { font: 700 38px "Noto Sans", sans-serif; fill: #00ae42; stroke: #00ae42; stroke-width: 1px; }
.bedmat { font: 12px "Liberation Sans", sans-serif; fill: #9da0a0; }
.bedhot { font: 9px "Liberation Sans", sans-serif; fill: #8d9090; }

.toolbar { position: relative; display: flex; align-items: center; height: 50px; padding: 0 3px 0 2px; background: #3a3c44; }
.tg { display: flex; }
.tg + .tg { margin-left: 10px; }
.tg button { width: 44px; }
.tg.wide button { width: 45px; }
.tg svg { width: 44px; height: 50px; fill: none; stroke: #b4b5b8; stroke-width: 1.200; }
.tg .faint { opacity: .25; }
.tsep { width: 2px; height: 32px; margin: 0 14px; background: #5b5c63; }
.auto { font: 700 6px "Liberation Sans", sans-serif; fill: #b4b5b8; stroke: none; }
.ta { font: 700 24px "Liberation Sans", sans-serif; }

.notes { position: relative; align-self: flex-end; width: 375px; margin: 0 11px 8px 0; display: flex; flex-direction: column; gap: 10px; font-size: 13px; line-height: 15px; color: #d2d2d3; }
.note { display: flex; align-items: center; justify-content: space-between; min-height: 45px; padding: 0 7px; border: 1px solid #424147; border-left: 8px solid #0a9a30; border-radius: 4px; background: #2d2c30; }
.note a { color: #0a9a30; text-decoration: underline; }
.info { min-height: 75px; padding-bottom: 2px; }
.nctl { display: flex; flex-direction: column; align-items: flex-end; gap: 24px; }
.x { width: 26px; height: 26px; border-radius: 13px; background: #424147; }
.x svg { fill: none; stroke: #9c9b9f; stroke-width: 1.200; }
.mini { width: 12px; height: 12px; border-radius: 6px; background: #47464c; margin-right: 1px; padding: 0 3px; }
.mini::before { content: ""; display: block; height: 2px; background: #77767b; }
```
